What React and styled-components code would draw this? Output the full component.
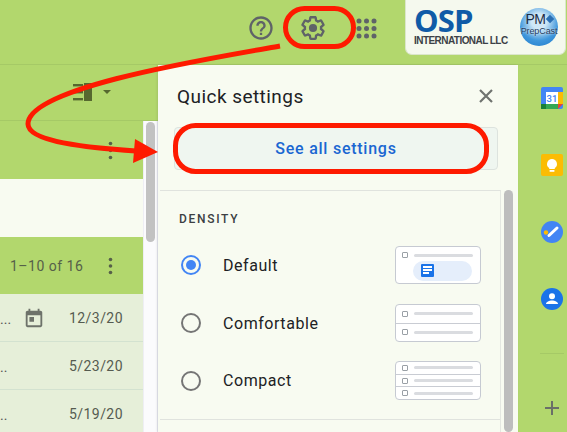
import React from "react";
import styled, { createGlobalStyle } from "styled-components";

const Global = createGlobalStyle`
  html, body { margin: 0; padding: 0; background: #b2d76d; }
  * { box-sizing: border-box; }
`;

const Page = styled.div`
  position: relative;
  width: 567px;
  height: 432px;
  overflow: hidden;
  background: #b2d76d;
  font-family: Roboto, "Liberation Sans", sans-serif;
  display: flex;
  flex-direction: column;
`;

const Header = styled.header`
  height: 65px;
  flex: none;
  display: flex;
  align-items: flex-start;
  justify-content: flex-end;
  border-bottom: 1px solid #a5c966;
`;

const IconTools = styled.div`
  display: flex;
  align-items: center;
  gap: 24px;
  height: 55px;
  padding-top: 1px;
  margin-right: 28px;
`;

const ToolIcon = styled.svg`
  flex: none;
  display: block;
  fill: #5f6368;
  margin-left: ${(p) => p.$ml ?? 0}px;
`;

const LogoCard = styled.div`
  width: 161px;
  height: 55px;
  margin-right: 1px;
  padding: 7px 7px 0 8px;
  background: #f5f9ee;
  border: 1px solid #dbe6cb;
  border-top: none;
  border-radius: 0 0 7px 7px;
  display: flex;
  justify-content: space-between;
`;

const LogoWords = styled.div`
  display: flex;
  flex-direction: column;
  gap: 3px;
`;

const LogoMark = styled.span`
  font: 700 31px/26px "Open Sans", sans-serif;
  letter-spacing: -0.9px;
  color: #0f5ba7;
`;

const LogoSub = styled.span`
  font: 700 10px/10px "Liberation Sans", sans-serif;
  letter-spacing: -0.55px;
  color: #3c4146;
  white-space: nowrap;
`;

const Badge = styled.div`
  width: 38px;
  height: 38px;
  margin-top: 1px;
  border-radius: 50%;
  background: radial-gradient(circle at 50% 35%, #cfe7f6 0 24%, #3f97dc 62%, #1a78c8 100%);
  display: flex;
  flex-direction: column;
  align-items: center;
  padding-top: 4px;
`;

const BadgeTop = styled.div`
  display: flex;
  align-items: center;
  gap: 1px;
  font: 400 14px/14px "Liberation Sans", sans-serif;
  color: #1d2c44;
  letter-spacing: -0.4px;
`;

const BadgeDiamond = styled.i`
  width: 6px;
  height: 6px;
  transform: rotate(45deg);
  background: #2a6fb4;
`;

const BadgeBottom = styled.span`
  font: 400 9px/10px "Liberation Sans", sans-serif;
  letter-spacing: -0.1px;
  color: #1d3a60;
  text-shadow: 0 0 2px #fff;
`;

const Body = styled.div`
  flex: 1;
  min-height: 0;
  display: flex;
`;

const MailColumn = styled.div`
  width: 158px;
  flex: none;
  display: flex;
  flex-direction: column;
`;

const ViewBar = styled.div`
  height: 56px;
  flex: none;
  display: flex;
  justify-content: flex-end;
  align-items: center;
  padding-right: 47px;
  padding-bottom: 2px;
  border-bottom: 1px solid #a5c966;
`;

const MailArea = styled.div`
  flex: 1;
  min-height: 0;
  display: flex;
`;

const MailList = styled.div`
  width: 143px;
  flex: none;
  display: flex;
  flex-direction: column;
`;

const GreenBar = styled.div`
  height: ${(p) => p.$h}px;
  flex: none;
  background: #b2d76d;
  display: flex;
  align-items: center;
  justify-content: space-between;
  padding: 0 30px 0 10px;
`;

const BlankBand = styled.div`
  height: 58px;
  flex: none;
  background: #f8fbf1;
`;

const CountText = styled.span`
  font-size: 14px;
  letter-spacing: 0.5px;
  color: #566049;
`;

const MailRow = styled.div`
  height: 48px;
  flex: none;
  background: #e6efd9;
  border-bottom: 1px solid #d3e2d0;
  display: flex;
  align-items: center;
  justify-content: space-between;
  padding: 1px 20px 0 0;
`;

const Snippet = styled.span`
  font-size: 14px;
  color: #555;
  line-height: 14px;
  margin-top: 2px;
`;

const RowRight = styled.div`
  display: flex;
  align-items: center;
  gap: 24px;
`;

const DateText = styled.span`
  font-size: 14px;
  letter-spacing: 0.45px;
  color: #555b50;
`;

const ListScroll = styled.div`
  width: 15px;
  flex: none;
  background: #fbfbfd;
  border-left: 1px solid #eeeef4;
  border-right: 1px solid #e6e6f0;
  padding: 1px 2px;
`;

const ListThumb = styled.div`
  width: 9px;
  height: 120px;
  background: #c2c2c2;
  border-radius: 5px;
`;

const Panel = styled.aside`
  width: 360px;
  flex: none;
  background: #f8fbf1;
  display: flex;
  flex-direction: column;
  box-shadow: -1px 0 2px rgba(60, 64, 67, 0.12);
`;

const PanelHead = styled.div`
  height: 62px;
  flex: none;
  display: flex;
  align-items: center;
  justify-content: space-between;
  padding: 0 20px 0 19px;
`;

const PanelTitle = styled.h2`
  margin: 0;
  font-size: 19px;
  font-weight: 400;
  letter-spacing: 0.45px;
  color: #202124;
`;

const CloseButton = styled.button`
  width: 24px;
  height: 24px;
  padding: 0;
  border: none;
  background: transparent;
  display: flex;
  align-items: center;
  justify-content: center;
`;

const SeeAll = styled.button`
  height: 43px;
  flex: none;
  margin: 0 20px 0 16px;
  background: #eff6f0;
  border: 1px solid #dde3de;
  border-radius: 4px;
  font-family: inherit;
  font-size: 16px;
  font-weight: 500;
  letter-spacing: 0.75px;
  color: #1a67d2;
  padding: 0;
`;

const ScrollWrap = styled.div`
  flex: 1;
  min-height: 0;
  margin-top: 20px;
  display: flex;
`;

const Section = styled.section`
  width: 341px;
  margin-left: 2px;
  flex: none;
  border-top: 1px solid #e0e3de;
  border-right: 1px solid #e4e7e1;
`;

const SectionLabel = styled.div`
  font-size: 12px;
  font-weight: 500;
  letter-spacing: 1.7px;
  color: #3c4043;
  padding: 21px 0 0 19px;
  line-height: 14px;
  height: 45px;
`;

const Option = styled.label`
  height: ${(p) => p.$h}px;
  display: flex;
  align-items: center;
  padding-left: 21px;
  padding-right: 19px;
`;

const RadioMark = styled.span`
  width: 20px;
  height: 20px;
  flex: none;
  border-radius: 50%;
  border: 2px solid ${(p) => (p.$on ? "#4285f4" : "#757575")};
  display: flex;
  align-items: center;
  justify-content: center;
  &::after {
    content: "";
    width: 10px;
    height: 10px;
    border-radius: 50%;
    background: ${(p) => (p.$on ? "#4285f4" : "transparent")};
  }
`;

const OptionText = styled.span`
  flex: 1;
  margin-left: 22px;
  font-size: 16px;
  letter-spacing: 0.55px;
  color: #202124;
`;

const Thumb = styled.div`
  width: 86px;
  height: ${(p) => p.$h}px;
  flex: none;
  background: #fff;
  border: 1px solid #c6cad2;
  border-radius: 4px;
  display: flex;
  flex-direction: column;
  overflow: hidden;
`;

const ThumbRow = styled.div`
  flex: 1;
  display: flex;
  align-items: center;
  gap: 6px;
  padding: 0 7px 0 6px;
  & + & {
    border-top: 1px solid #c9ccd3;
  }
`;

const ThumbBox = styled.i`
  width: 6px;
  height: 6px;
  flex: none;
  border: 1px solid #9aa0a6;
  border-radius: 1px;
`;

const ThumbLine = styled.i`
  flex: 1;
  height: 3px;
  border-radius: 2px;
  background: #dadce0;
`;

const DefaultThumbTop = styled.div`
  display: flex;
  align-items: center;
  gap: 6px;
  padding: 5px 7px 0 6px;
`;

const DocPill = styled.div`
  width: 59px;
  height: 20px;
  margin: 3px 0 0 17px;
  border-radius: 10px;
  background: #e5eefb;
  padding: 3px 0 0 8px;
`;

const Doc = styled.div`
  width: 13px;
  height: 13px;
  border-radius: 1px;
  background: #1a73e8;
  padding: 2px;
  display: flex;
  flex-direction: column;
  gap: 1.4px;
`;

const DocLine = styled.i`
  height: 1.6px;
  width: ${(p) => p.$w}%;
  background: #fff;
`;

const SectionEnd = styled.div`
  margin-top: 10px;
  border-top: 1px solid #e0e3de;
  height: 14px;
`;

const PanelScroll = styled.div`
  width: 9px;
  margin-left: 3px;
  flex: none;
  background: #bdbdbd;
  border-radius: 5px;
  height: 242px;
`;

const Sidebar = styled.nav`
  flex: 1;
  display: flex;
  flex-direction: column;
  padding: 22px 0 0 23px;
`;

const SideIcon = styled.svg`
  display: block;
  flex: none;
  margin-bottom: 45px;
`;

const SideRule = styled.div`
  width: 24px;
  height: 1px;
  background: #a5c966;
  margin: -2px 0 0 -1px;
`;

const PlusIcon = styled.svg`
  display: block;
  margin: 47px 0 0 4px;
  fill: #6a6f68;
`;

const Callouts = styled.svg`
  position: absolute;
  left: 0;
  top: 0;
  pointer-events: none;
`;

const Kebab = ({ color = "#566049", gap = 7 }) => (
  <svg width="5" height={gap * 2 + 5} style={{ display: "block", fill: color }}>
    <circle cx="2.5" cy="2.5" r="1.8" />
    <circle cx="2.5" cy={2.5 + gap} r="1.8" />
    <circle cx="2.5" cy={2.5 + gap * 2} r="1.8" />
  </svg>
);

const GEAR =
  "M13.85 22.25h-3.7c-.74 0-1.36-.54-1.45-1.27l-.27-1.89c-.27-.14-.53-.29-.79-.46l-1.8.72c-.7.26-1.47-.03-1.81-.65L2.2 15.53c-.35-.66-.2-1.44.36-1.88l1.53-1.19c-.01-.15-.02-.3-.02-.46 0-.15.01-.31.02-.46l-1.52-1.19c-.59-.45-.74-1.26-.37-1.88l1.85-3.19c.34-.62 1.11-.9 1.79-.63l1.81.73c.26-.17.52-.32.78-.46l.27-1.91c.09-.7.71-1.25 1.44-1.25h3.7c.74 0 1.36.54 1.45 1.27l.27 1.89c.27.14.53.29.79.46l1.8-.72c.71-.26 1.48.03 1.82.65l1.84 3.18c.36.66.2 1.44-.36 1.88l-1.52 1.19c.01.15.02.3.02.46s-.01.31-.02.46l1.52 1.19c.56.45.72 1.23.37 1.86l-1.86 3.22c-.34.62-1.11.9-1.8.63l-1.8-.72c-.26.17-.52.32-.78.46l-.27 1.91c-.1.68-.72 1.22-1.46 1.22zm-3.23-2h2.76l.37-2.55.53-.22c.44-.18.88-.44 1.34-.78l.45-.34 2.38.96 1.38-2.4-2.03-1.58.07-.56c.03-.26.06-.51.06-.78s-.03-.53-.06-.78l-.07-.56 2.03-1.58-1.39-2.4-2.39.96-.45-.35c-.42-.32-.87-.58-1.33-.77l-.52-.22-.37-2.55h-2.76l-.37 2.55-.53.21c-.44.19-.88.44-1.34.79l-.45.33-2.38-.95-1.39 2.39 2.03 1.58-.07.56a7 7 0 0 0-.06.79c0 .26.02.53.06.78l.07.56-2.03 1.58 1.38 2.4 2.39-.96.45.35c.43.33.86.58 1.33.77l.53.22.38 2.55z";

const rows = [
  { date: "12/3/20", dots: "...", cal: true },
  { date: "5/23/20", dots: ".." },
  { date: "5/19/20", dots: ".." },
];

export default function App() {
  return (
    <Page>
      <Global />
      <Header>
        <IconTools>
          <ToolIcon width="28" height="28" viewBox="0 0 24 24">
            <path d="M11 18h2v-2h-2v2zm1-16C6.48 2 2 6.48 2 12s4.48 10 10 10 10-4.48 10-10S17.52 2 12 2zm0 18c-4.41 0-8-3.59-8-8s3.59-8 8-8 8 3.59 8 8-3.59 8-8 8zm0-14c-2.21 0-4 1.79-4 4h2c0-1.1.9-2 2-2s2 .9 2 2c0 2-3 1.75-3 5h2c0-2.25 3-2.5 3-5 0-2.21-1.79-4-4-4z" />
          </ToolIcon>
          <ToolIcon width="28" height="28" viewBox="0 0 24 24">
            <path d={GEAR} />
            <circle cx="12" cy="12" r="3.5" />
          </ToolIcon>
          <ToolIcon $ml={5} width="21" height="21" viewBox="0 0 21 21">
            {[3, 10.5, 18].flatMap((y) =>
              [3, 10.5, 18].map((x) => <circle key={`${x}-${y}`} cx={x} cy={y} r="2.5" />)
            )}
          </ToolIcon>
        </IconTools>
        <LogoCard>
          <LogoWords>
            <LogoMark>OSP</LogoMark>
            <LogoSub>INTERNATIONAL LLC</LogoSub>
          </LogoWords>
          <Badge>
            <BadgeTop>
              PM
              <BadgeDiamond />
            </BadgeTop>
            <BadgeBottom>PrepCast</BadgeBottom>
          </Badge>
        </LogoCard>
      </Header>
      <Body>
        <MailColumn>
          <ViewBar>
            <svg width="38" height="18" viewBox="0 0 38 18" style={{ display: "block", fill: "#56682f" }}>
              <rect x="0" y="1" width="10" height="2.4" />
              <rect x="0" y="8" width="10" height="2.4" />
              <rect x="0" y="15" width="10" height="2.4" />
              <rect x="11" y="0" width="8" height="18" />
              <path d="M30 7h8l-4 4z" />
            </svg>
          </ViewBar>
          <MailArea>
            <MailList>
              <GreenBar $h={58}>
                <span />
                <Kebab />
              </GreenBar>
              <BlankBand />
              <GreenBar $h={57}>
                <CountText>1–10 of 16</CountText>
                <Kebab gap={6.5} />
              </GreenBar>
              {rows.map((r) => (
                <MailRow key={r.date}>
                  <Snippet>{r.dots}</Snippet>
                  <RowRight>
                    {r.cal && (
                      <svg width="22" height="22" viewBox="0 0 24 24" style={{ display: "block", fill: "#6d726a" }}>
                        <path d="M19 4h-1V2h-2v2H8V2H6v2H5c-1.1 0-2 .9-2 2v14c0 1.1.9 2 2 2h14c1.1 0 2-.9 2-2V6c0-1.1-.9-2-2-2zm0 16H5V9h14v11zM7 11h5v5H7z" />
                      </svg>
                    )}
                    <DateText>{r.date}</DateText>
                  </RowRight>
                </MailRow>
              ))}
            </MailList>
            <ListScroll>
              <ListThumb />
            </ListScroll>
          </MailArea>
        </MailColumn>
        <Panel>
          <PanelHead>
            <PanelTitle>Quick settings</PanelTitle>
            <CloseButton aria-label="Close">
              <svg width="16" height="16" viewBox="0 0 16 16" style={{ display: "block" }}>
                <path d="M2 2l12 12M14 2L2 14" stroke="#6f736f" strokeWidth="2.2" fill="none" />
              </svg>
            </CloseButton>
          </PanelHead>
          <SeeAll>See all settings</SeeAll>
          <ScrollWrap>
            <Section>
              <SectionLabel>DENSITY</SectionLabel>
              <Option $h={58}>
                <RadioMark $on />
                <OptionText>Default</OptionText>
                <Thumb $h={38}>
                  <DefaultThumbTop>
                    <ThumbBox />
                    <ThumbLine />
                  </DefaultThumbTop>
                  <DocPill>
                    <Doc>
                      <DocLine $w={100} />
                      <DocLine $w={100} />
                      <DocLine $w={65} />
                    </Doc>
                  </DocPill>
                </Thumb>
              </Option>
              <Option $h={58}>
                <RadioMark />
                <OptionText>Comfortable</OptionText>
                <Thumb $h={38}>
                  <ThumbRow><ThumbBox /><ThumbLine /></ThumbRow>
                  <ThumbRow><ThumbBox /><ThumbLine /></ThumbRow>
                </Thumb>
              </Option>
              <Option $h={57}>
                <RadioMark />
                <OptionText>Compact</OptionText>
                <Thumb $h={39}>
                  <ThumbRow><ThumbBox /><ThumbLine /></ThumbRow>
                  <ThumbRow><ThumbBox /><ThumbLine /></ThumbRow>
                  <ThumbRow><ThumbBox /><ThumbLine /></ThumbRow>
                </Thumb>
              </Option>
              <SectionEnd />
            </Section>
            <PanelScroll />
          </ScrollWrap>
        </Panel>
        <Sidebar>
          <SideIcon width="22" height="22" viewBox="0 0 22 22">
            <rect width="22" height="22" rx="2" fill="#4285f4" />
            <rect x="5" y="5" width="12" height="12" fill="#fff" />
            <rect x="17" y="5" width="5" height="12" fill="#fbbc04" />
            <rect x="5" y="17" width="12" height="5" fill="#34a853" />
            <rect x="0" y="17" width="5" height="5" fill="#188038" />
            <path d="M17 17h5l-5 5z" fill="#ea4335" />
            <text x="11" y="15" textAnchor="middle" fontFamily="Roboto, sans-serif" fontSize="9.5" fontWeight="500" fill="#4285f4">31</text>
          </SideIcon>
          <SideIcon width="22" height="22" viewBox="0 0 22 22">
            <rect width="22" height="22" rx="2" fill="#fbbc04" />
            <path d="M11 5a5 5 0 0 0-2.8 9.1V15h5.6v-.9A5 5 0 0 0 11 5z" fill="#fff" />
            <rect x="8.6" y="16" width="4.8" height="1.8" fill="#fff" />
          </SideIcon>
          <SideIcon width="22" height="22" viewBox="0 0 22 22">
            <circle cx="11" cy="11" r="11" fill="#4285f4" />
            <path d="M8 14.5L16 7" stroke="#fff" strokeWidth="3" strokeLinecap="round" />
            <circle cx="5" cy="11.5" r="2.2" fill="#fbbc04" />
          </SideIcon>
          <SideIcon width="22" height="22" viewBox="0 0 22 22">
            <circle cx="11" cy="11" r="11" fill="#1a73e8" />
            <circle cx="11" cy="8.2" r="3" fill="#fff" />
            <path d="M5 16c0-2.4 3.3-3.6 6-3.6s6 1.2 6 3.6z" fill="#fff" />
          </SideIcon>
          <SideRule />
          <PlusIcon width="14" height="14" viewBox="0 0 14 14">
            <path d="M6 0h2v6h6v2H8v6H6V8H0V6h6z" />
          </PlusIcon>
        </Sidebar>
      </Body>
      <Callouts width="567" height="432" viewBox="0 0 567 432">
        <rect x="285.5" y="8.5" width="68" height="38" rx="19" fill="none" stroke="#fe1a00" strokeWidth="5" />
        <rect x="175.5" y="125.5" width="311" height="46" rx="20" fill="none" stroke="#fe1a00" strokeWidth="5" />
        <path
          d="M280 46 C 200 60 28 88 28 124 C 28 142 90 148 136 151"
          fill="none"
          stroke="#fe1a00"
          strokeWidth="5"
        />
        <path d="M135 139 L158 152 L133 163 Z" fill="#fe1a00" />
      </Callouts>
    </Page>
  );
}
